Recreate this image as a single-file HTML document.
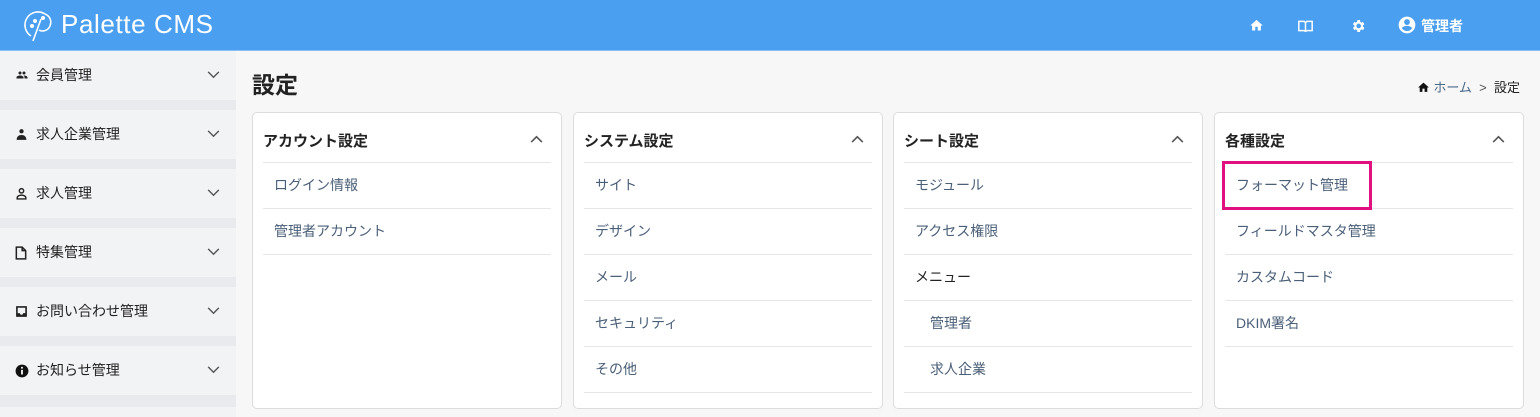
<!DOCTYPE html>
<html><head><meta charset="utf-8"><style>
*{box-sizing:border-box;margin:0;padding:0}
html,body{width:1540px;height:417px;overflow:hidden}
body{background:#f7f7f7;font-family:"Liberation Sans","Noto Sans CJK JP",sans-serif;position:relative}
.hdr{position:absolute;left:0;top:0;width:1540px;height:51px;background:#4b9ff0;border-bottom:1px solid #8cc0f5}
.logo{position:absolute;left:61px;top:9px;color:#fff;font-size:26px;letter-spacing:0.6px;font-weight:300}
.hicon{position:absolute;top:18px}
.admin{position:absolute;left:1421px;top:16px;color:#fff;font-weight:bold;font-size:14px}
.side{position:absolute;left:0;top:51px;width:236px;height:366px;background:#e8eaed;overflow:hidden}
.si{position:absolute;left:0;width:236px;height:49px;background:#f2f3f5;font-size:14px;color:#222}
.si span{position:absolute;left:36px;top:14px}
.si svg.ic{position:absolute;left:15px;top:18px}
.si svg.ch{position:absolute;left:207px;top:20px}
h1{position:absolute;left:252px;top:66px;font-size:23px;font-weight:bold;color:#222}
.bc{position:absolute;left:1407px;top:77px;font-size:13px;color:#555;width:113px;text-align:right;white-space:nowrap}
.bc .a{color:#4a6a8a}
.card{position:absolute;top:112px;width:310px;height:297px;background:#fff;border:1px solid #dcdcdc;border-radius:5px}
.ch2{position:absolute;left:10px;top:17px;font-size:15px;font-weight:bold;color:#222}
.up{position:absolute;right:18px;top:22px}
.list{position:absolute;left:10px;right:10px;top:49px;border-top:1px solid #e6e6e6}
.li{height:46px;border-bottom:1px solid #e6e6e6;font-size:14px;color:#4a5f78;padding:12px 0 0 11px}
.li.ind{padding-left:26px}
.li.dk{color:#222}
</style></head><body>
<div class="hdr">
<svg style="position:absolute;left:23px;top:10px" width="32" height="32" viewBox="0 0 32 32" fill="none" stroke="#fff" stroke-width="1.6"><path d="M22 4A13 13 0 1 0 8 26"/><path d="M22 4c5 2 7 7 5 12s-8 6-11 4"/><path d="M18 9L10 31"/><circle cx="9" cy="16" r="1.2" fill="#fff"/><circle cx="12" cy="11" r="1.2" fill="#fff"/><circle cx="20" cy="8" r="1.2" fill="#fff"/></svg>
<div class="logo">Palette CMS</div>
<svg class="hicon" style="left:1249px" width="15" height="15" viewBox="0 0 24 24" fill="#fff"><path d="M10 20v-6h4v6h5v-8h3L12 3 2 12h3v8z"/></svg>
<svg class="hicon" style="left:1297px" width="17" height="16" viewBox="0 0 24 24" fill="none" stroke="#fff" stroke-width="2.2"><path d="M2 5h8l2 2 2-2h8v14h-8l-2 1-2-1H2z"/><path d="M12 7v13"/></svg>
<svg class="hicon" style="left:1350px" width="16" height="16" viewBox="0 0 24 24" fill="#fff"><path d="M19.4 13a7.5 7.5 0 000-2l2.1-1.6-2-3.5-2.5 1a7 7 0 00-1.7-1L15 3h-4l-.4 2.9a7 7 0 00-1.7 1l-2.5-1-2 3.5L6.6 11a7.5 7.5 0 000 2l-2.1 1.6 2 3.5 2.5-1a7 7 0 001.7 1L11 21h4l.4-2.9a7 7 0 001.7-1l2.5 1 2-3.5zM13 15.5a3.5 3.5 0 110-7 3.5 3.5 0 010 7z"/></svg>
<svg class="hicon" style="left:1397px;top:15px" width="20" height="20" viewBox="0 0 24 24" fill="#fff"><path d="M12 2a10 10 0 100 20 10 10 0 000-20zm0 3a3.5 3.5 0 110 7 3.5 3.5 0 010-7zm0 14.2a7.5 7.5 0 01-6-3.2c0-2 4-3 6-3s6 1 6 3a7.5 7.5 0 01-6 3.2z"/></svg>
<div class="admin">管理者</div>
</div>
<div class="side">
<div class="si" style="top:0"><svg class="ic" width="14" height="12" viewBox="0 0 24 24" fill="#222"><path d="M16 11a3 3 0 100-6 3 3 0 000 6zm-8 0a3 3 0 100-6 3 3 0 000 6zm0 2c-2.3 0-7 1.2-7 3.5V19h14v-2.5C15 14.2 10.3 13 8 13zm8 0c-.3 0-.6 0-1 .1 1.2.8 2 2 2 3.4V19h6v-2.5c0-2.3-4.7-3.5-7-3.5z"/></svg><span>会員管理</span><svg class="ch" width="13" height="8" viewBox="0 0 14 9" fill="none" stroke="#555" stroke-width="1.6"><path d="M1 1l6 6 6-6"/></svg></div>
<div class="si" style="top:59px"><svg class="ic" width="13" height="13" viewBox="0 0 24 24" fill="#222"><circle cx="12" cy="6" r="4"/><path d="M3 22c0-6 4-9 9-9s9 3 9 9z"/></svg><span>求人企業管理</span><svg class="ch" width="13" height="8" viewBox="0 0 14 9" fill="none" stroke="#555" stroke-width="1.6"><path d="M1 1l6 6 6-6"/></svg></div>
<div class="si" style="top:118px"><svg class="ic" width="13" height="13" viewBox="0 0 24 24" fill="none" stroke="#222" stroke-width="2.6"><circle cx="12" cy="7" r="4"/><path d="M4 22v-2c0-3 4-5 8-5s8 2 8 5v2z"/></svg><span>求人管理</span><svg class="ch" width="13" height="8" viewBox="0 0 14 9" fill="none" stroke="#555" stroke-width="1.6"><path d="M1 1l6 6 6-6"/></svg></div>
<div class="si" style="top:177px"><svg class="ic" width="12" height="14" viewBox="0 0 20 24" fill="none" stroke="#222" stroke-width="2.6"><path d="M2 2h10l6 6v14H2z"/><path d="M12 2v6h6"/></svg><span>特集管理</span><svg class="ch" width="13" height="8" viewBox="0 0 14 9" fill="none" stroke="#555" stroke-width="1.6"><path d="M1 1l6 6 6-6"/></svg></div>
<div class="si" style="top:236px"><svg class="ic" width="13" height="13" viewBox="0 0 24 24" fill="#222"><path d="M3 2h18a1 1 0 011 1v18a1 1 0 01-1 1H3a1 1 0 01-1-1V3a1 1 0 011-1zm2 3v10h4a3 3 0 006 0h4V5z"/></svg><span>お問い合わせ管理</span><svg class="ch" width="13" height="8" viewBox="0 0 14 9" fill="none" stroke="#555" stroke-width="1.6"><path d="M1 1l6 6 6-6"/></svg></div>
<div class="si" style="top:295px"><svg class="ic" width="14" height="14" viewBox="0 0 24 24"><circle cx="12" cy="12" r="11" fill="#111"/><rect x="10.5" y="10" width="3" height="8" fill="#fff"/><circle cx="12" cy="6.5" r="1.7" fill="#fff"/></svg><span>お知らせ管理</span><svg class="ch" width="13" height="8" viewBox="0 0 14 9" fill="none" stroke="#555" stroke-width="1.6"><path d="M1 1l6 6 6-6"/></svg></div>
<div class="si" style="top:356px;height:10px"></div>
</div>
<h1>設定</h1>
<div class="bc"><svg width="13" height="12" viewBox="0 0 24 22" fill="#111" style="vertical-align:-1px"><path d="M10 20v-6h4v6h5v-8h3L12 3 2 12h3v8z"/></svg> <span class="a">ホーム</span> &nbsp;&gt;&nbsp; <span style="color:#222">設定</span></div>

<div class="card" style="left:252px"><div class="ch2">アカウント設定</div><svg class="up" width="13" height="8" viewBox="0 0 14 9" fill="none" stroke="#555" stroke-width="1.8"><path d="M1 8l6-6 6 6"/></svg>
<div class="list"><div class="li">ログイン情報</div><div class="li">管理者アカウント</div></div></div>
<div class="card" style="left:573px"><div class="ch2">システム設定</div><svg class="up" width="13" height="8" viewBox="0 0 14 9" fill="none" stroke="#555" stroke-width="1.8"><path d="M1 8l6-6 6 6"/></svg>
<div class="list"><div class="li">サイト</div><div class="li">デザイン</div><div class="li">メール</div><div class="li">セキュリティ</div><div class="li">その他</div></div></div>
<div class="card" style="left:893px"><div class="ch2">シート設定</div><svg class="up" width="13" height="8" viewBox="0 0 14 9" fill="none" stroke="#555" stroke-width="1.8"><path d="M1 8l6-6 6 6"/></svg>
<div class="list"><div class="li">モジュール</div><div class="li">アクセス権限</div><div class="li dk">メニュー</div><div class="li ind">管理者</div><div class="li ind">求人企業</div></div></div>
<div class="card" style="left:1214px"><div class="ch2">各種設定</div><svg class="up" width="13" height="8" viewBox="0 0 14 9" fill="none" stroke="#555" stroke-width="1.8"><path d="M1 8l6-6 6 6"/></svg>
<div class="list"><div class="li">フォーマット管理</div><div class="li">フィールドマスタ管理</div><div class="li">カスタムコード</div><div class="li">DKIM署名</div></div></div>
<div style="position:absolute;left:1222px;top:161px;width:150px;height:49px;border:3px solid #e0107f"></div>
</body></html>
